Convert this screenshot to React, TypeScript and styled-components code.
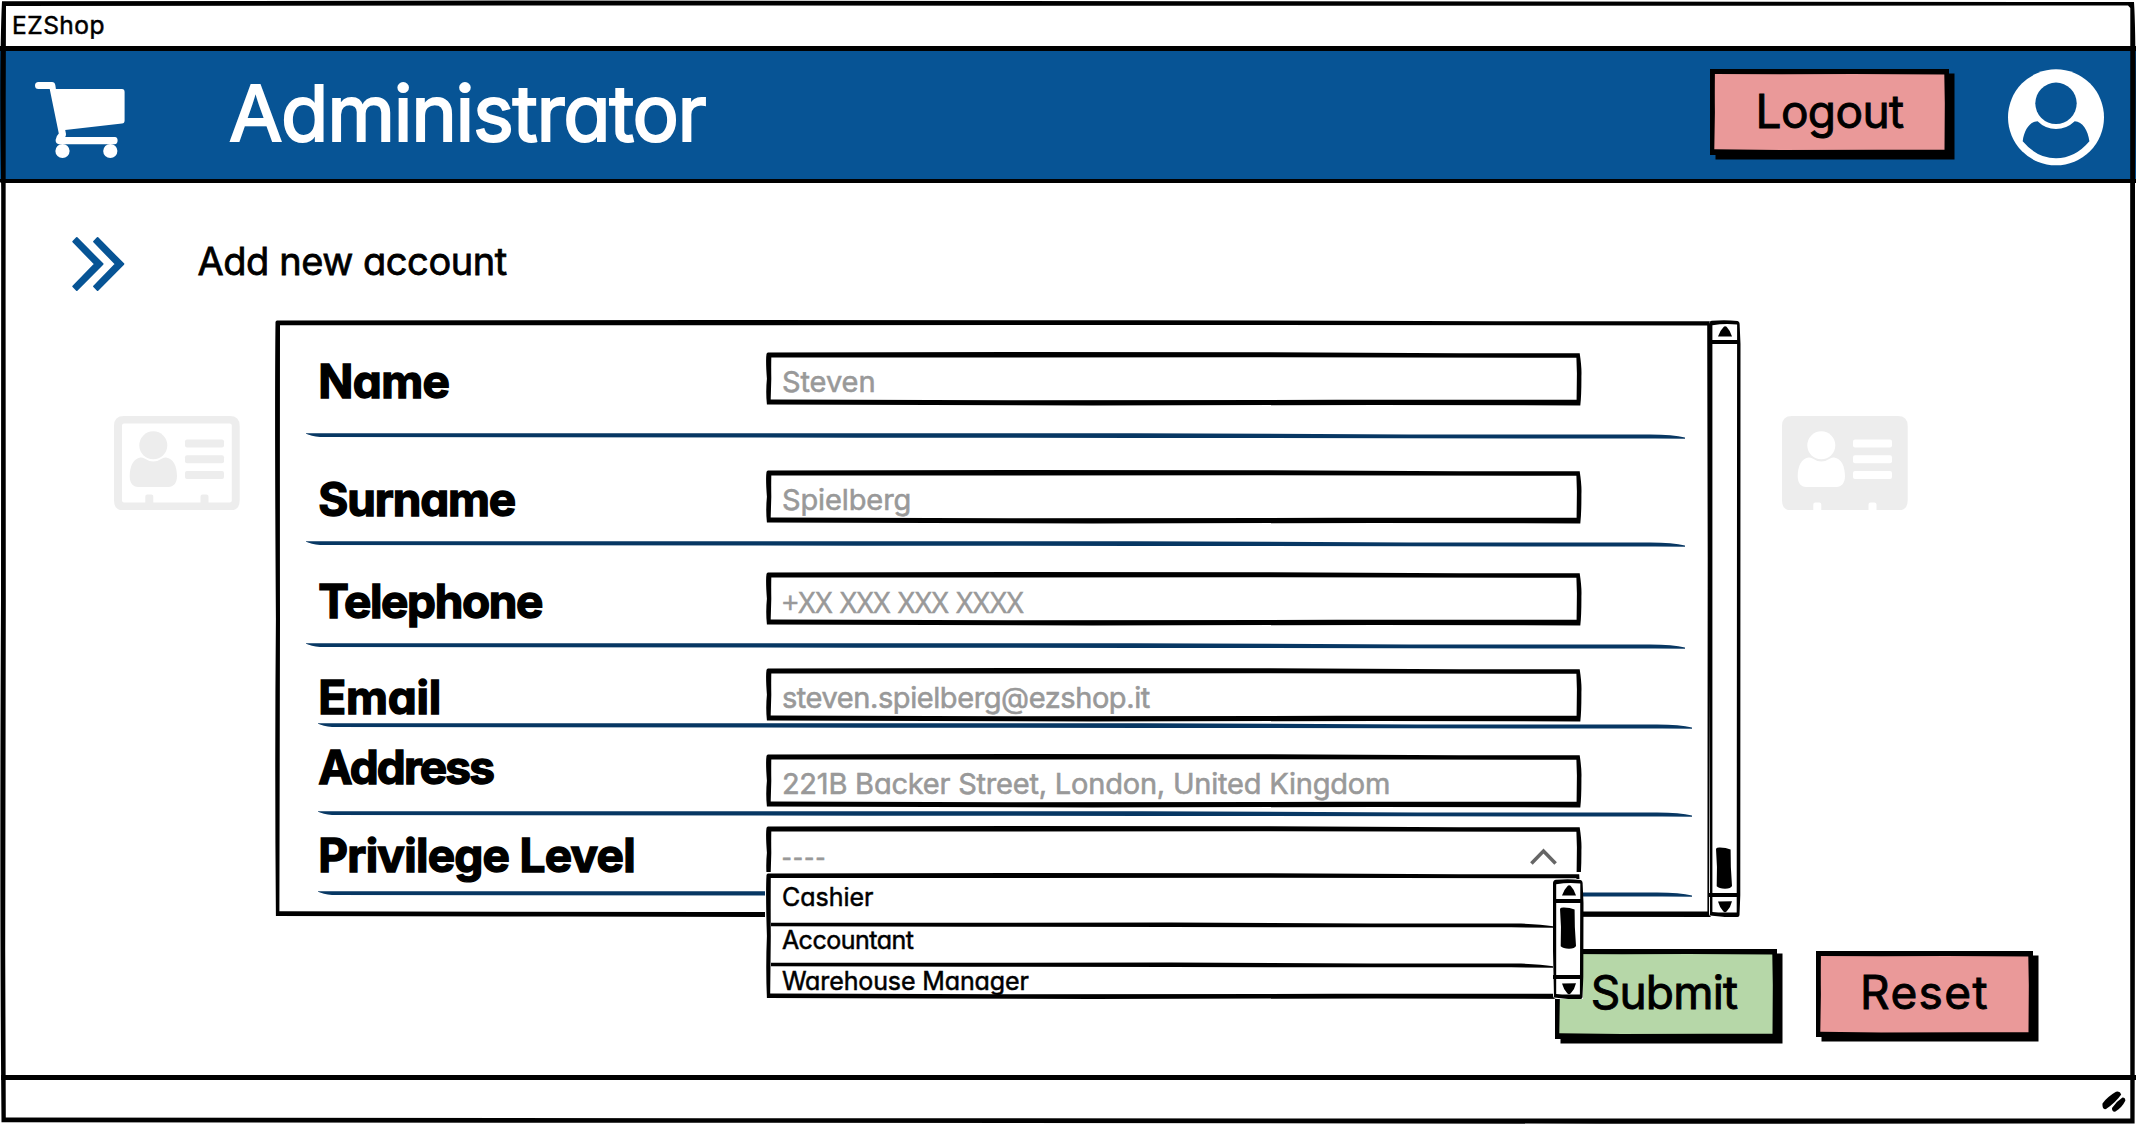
import React from "react";
import styled, { createGlobalStyle } from "styled-components";

const BLUE = "#075495";
const NAVY = "#073763";
const PINK = "#ea9999";
const GREEN = "#b6d7a8";
const GHOST = "#ededed";
const HINT = "#999999";

const GlobalStyle = createGlobalStyle`
  body {
    margin: 0;
    background: #fff;
    color: #000;
    font-family: Inter, "Liberation Sans", sans-serif;
    font-feature-settings: "cv11";
  }
  svg { display: block; flex: none; }
`;

/* ---------- hand-drawn outline ---------- */

const framePath = (w: number, h: number, t: number) =>
  `M2 .6L${w * 0.3} 0L${w * 0.6} .2L${w * 0.85} 1.3L${w - 1.8} 1.2` +
  `Q${w + 0.4} ${h * 0.3} ${w - 0.1} ${h * 0.45}Q${w} ${h * 0.8} ${w - 1.2} ${h}` +
  `L${w * 0.75} ${h - 0.6}L${w * 0.4} ${h}L${w * 0.2} ${h - 0.4}L.9 ${h - 1}` +
  `Q-.4 ${h * 0.75} .9 ${h * 0.5}Q-.5 ${h * 0.15} .5 2Q.8 .7 2 .6Z` +
  `M${t + 0.4} ${t + 0.6}Q${t + 0.2} ${h * 0.3} ${t + 0.4} ${h * 0.5}L${t - 0.2} ${h - t - 1.2}` +
  `L${w * 0.3} ${h - t - 0.4}L${w * 0.7} ${h - t - 0.8}L${w - t} ${h - t - 0.8}` +
  `L${w - t + 0.3} ${h * 0.4}L${w - t - 0.2} ${t + 0.9}L${w * 0.6} ${t + 0.4}L${w * 0.3} ${t + 0.7}Z`;

const Overlay = styled.svg`
  position: absolute;
  left: 0;
  top: 0;
  pointer-events: none;
`;

const Frame = ({ w, h, t = 4.9 }: { w: number; h: number; t?: number }) => (
  <Overlay width={w} height={h} viewBox={`0 0 ${w} ${h}`} overflow="visible">
    <path d={framePath(w, h, t)} fillRule="evenodd" fill="#000" />
  </Overlay>
);

/* ---------- text ---------- */

const Text = styled.span<{ $size: number; $track?: number; $bold?: boolean; $color?: string; $round?: number }>`
  font-size: ${(p) => p.$size}px;
  line-height: 1;
  font-weight: ${(p) => (p.$bold ? 700 : 400)};
  letter-spacing: ${(p) => p.$track ?? 0}px;
  color: ${(p) => p.$color ?? "#000"};
  -webkit-text-stroke: ${(p) => p.$round ?? 0.02}em ${(p) => p.$color ?? "#000"};
  stroke-linejoin: round;
  white-space: nowrap;
`;

const Hint = styled(Text)<{ $narrow?: boolean }>`
  ${(p) => p.$narrow && `font-family: "Open Sans", sans-serif;`}
`;

/* ---------- window ---------- */

const Window = styled.div`
  position: relative;
  display: flex;
  flex-direction: column;
  width: 2136px;
  height: 1124px;
  overflow: hidden;
  background: #fff;
`;

const WindowOutline = () => (
  <Overlay width="2136" height="1124" viewBox="0 0 2136 1124">
    <path fill="#fff" d="M0 182.400H1.200V1074L.3 1124H0Z" />
    <path
      fillRule="evenodd"
      d="M2 1.300L500 .6L1200 1.200L2134 2Q2136.500 40 2135 180L2135.300 700L2134.600 1123.600L1600 1123.700L700 1122.800L1.500 1122.200Q-.5 900 1 600L1.200 190Q-.8 60 2 1.300Z
         M6 6L5.700 100L5.600 300L5.800 600L5.200 950L5.800 1117.400L700 1118.200L1600 1118.500L2130.300 1118.400L2130 500L2130.300 8L2128 5.600L1100 5.800L600 5.400Z"
    />
  </Overlay>
);

const TitleBar = styled.div`
  box-sizing: border-box;
  height: 51px;
  padding: 12.6px 0 0 12px;
  border-bottom: 5px solid #000;
`;

const Header = styled.header`
  box-sizing: border-box;
  display: flex;
  align-items: flex-start;
  height: 131.5px;
  padding-left: 35px;
  background: ${BLUE};
  border-bottom: 4.5px solid #000;
`;

const CartIcon = styled.svg`
  margin-top: 31px;
`;

const HeaderTitle = styled.h1`
  display: flex;
  flex: 1;
  margin: 24px 0 0 103px;
`;

const Avatar = styled.svg`
  margin: 17.5px 32px 0 59px;
`;

const Button = styled.button<{ $fill: string; $w: number; $h: number; $top: number; $left?: number; $pad: number; $nudge?: number }>`
  position: relative;
  flex: none;
  box-sizing: border-box;
  display: flex;
  justify-content: center;
  align-items: flex-start;
  width: ${(p) => p.$w}px;
  height: ${(p) => p.$h}px;
  margin: ${(p) => p.$top}px 0 0 ${(p) => p.$left ?? 0}px;
  padding: ${(p) => p.$pad}px ${(p) => p.$nudge ?? 0}px 0 0;
  border: 0;
  font-family: inherit;
  font-feature-settings: inherit;
  background: ${(p) => p.$fill};
  box-shadow: inset 0 0 0 2px #000, 5.5px 4.5px 0 #000;
`;

/* ---------- body ---------- */

const Body = styled.main`
  flex: 1;
  display: flex;
  flex-direction: column;
`;

const Heading = styled.div`
  display: flex;
  align-items: flex-start;
  height: 137.8px;
  padding-left: 72px;
`;

const Chevrons = styled.svg`
  margin-top: 54.5px;
`;

const HeadingText = styled.h2`
  display: flex;
  margin: 59.4px 0 0 72.5px;
`;

const Middle = styled.div`
  display: flex;
  align-items: flex-start;
`;

const Card = styled.svg<{ $left: number }>`
  margin: 95.4px 0 0 ${(p) => p.$left}px;
`;

const Panel = styled.section`
  position: relative;
  z-index: 1;
  display: flex;
  width: 1465.5px;
  height: 597px;
  margin-left: 35px;
`;

const Form = styled.div`
  flex: 1;
  padding: 4.7px 0 0 43.6px;
`;

const Row = styled.div<{ $h: number }>`
  display: flex;
  flex-direction: column;
  height: ${(p) => p.$h}px;
`;

const Fields = styled.div`
  flex: 1;
  display: grid;
  grid-template-columns: 447.6px 815.5px;
  align-items: start;
  min-height: 0;
`;

const Label = styled.label<{ $top: number }>`
  display: flex;
  margin-top: ${(p) => p.$top}px;
`;

const Field = styled.div<{ $top: number }>`
  position: relative;
  box-sizing: border-box;
  display: flex;
  height: 53.5px;
  margin-top: ${(p) => p.$top}px;
  padding: 14.8px 0 0 16px;
`;

const Select = styled(Field)`
  height: 46px;
`;

const SelectFrame = styled.div`
  position: absolute;
  inset: 0 -2px 0 -2px;
  overflow: hidden;
  & > svg { left: 2px; }
`;

const Caret = styled.svg`
  margin: 7px 24.5px 0 auto;
`;

const RuleSvg = styled.svg<{ $shift: number }>`
  margin-left: ${(p) => p.$shift}px;
`;

const Rule = ({ w, shift }: { w: number; shift: number }) => (
  <RuleSvg $shift={shift} width={w} height="6" viewBox={`0 0 ${w} 6`}>
    <path
      fill={NAVY}
      d={`M0 .2L${w * 0.6} .3L${w * 0.8} 1.4L${w - 35} 1.6Q${w - 12} 1.8 ${w} 4.6V5.7L${w - 30} 5.6L${w * 0.6} 4.9L${w * 0.4} 4.7L14 4Q5 3 0 .8Z`}
    />
  </RuleSvg>
);

/* ---------- dropdown ---------- */

const Menu = styled.div`
  position: absolute;
  left: -1px;
  top: 46px;
  z-index: 2;
  display: flex;
  width: 818px;
  height: 127px;
  background: #fff;
`;

const MenuFrame = styled.div`
  position: absolute;
  left: 1px;
  top: 0.6px;
`;

const Options = styled.ul`
  flex: 1;
  margin: 0;
  padding: 0 0 0 6px;
  list-style: none;
`;

const Option = styled.li<{ $h: number; $pad: number }>`
  box-sizing: border-box;
  display: flex;
  flex-direction: column;
  justify-content: space-between;
  height: ${(p) => p.$h}px;
  padding: ${(p) => p.$pad}px 0 0 11px;
`;

const Divider = styled.svg`
  margin-left: -11px;
`;

/* ---------- scrollbar ---------- */

const Bar = styled.div<{ $w: number; $h: number; $top: number }>`
  position: relative;
  flex: none;
  display: flex;
  flex-direction: column;
  align-items: center;
  width: ${(p) => p.$w}px;
  height: ${(p) => p.$h}px;
  margin-top: ${(p) => p.$top}px;
  background: #fff;
  border-radius: 4px;
`;

const Cap = styled.div<{ $end?: boolean }>`
  box-sizing: border-box;
  display: flex;
  justify-content: center;
  width: 100%;
  height: 24px;
  padding: ${(p) => (p.$end ? 4 : 6)}px 0 0 2px;
  border: 0 solid #000;
  border-width: ${(p) => (p.$end ? "4px 0 0" : "0 0 4px")};
`;

const Track = styled.div<{ $down?: boolean }>`
  flex: 1;
  display: flex;
  flex-direction: column;
  justify-content: ${(p) => (p.$down ? "flex-end" : "flex-start")};
  padding: ${(p) => (p.$down ? "0 0 4px" : "4px 0 0")};
`;

const ScrollBar = ({ w, h, top = 0, t, down }: { w: number; h: number; top?: number; t: number; down?: boolean }) => (
  <Bar $w={w} $h={h} $top={top}>
    <Cap>
      <svg width="14" height="11" viewBox="0 0 14 11">
        <path d="M0 10.6Q1.5 5 5.6.9Q7 -.3 8.6.8Q12.500 5 14 10.600Z" />
      </svg>
    </Cap>
    <Track $down={down}>
      <svg width="16" height="42" viewBox="0 0 16 42">
        <path d="M0 1.800Q1 .2 4 .4Q10 .6 14.600 2.400Q14.400 20 16 39Q15 41.500 9 41.800Q3 41.500 .7 39.200Q1.600 20 0 1.800Z" />
      </svg>
    </Track>
    <Cap $end>
      <svg width="14" height="12" viewBox="0 0 14 12">
        <path d="M0 .4L14 .2Q12.800 6 8.800 10.200Q7 12.200 5.200 10.200Q1.500 6 0 .4Z" />
      </svg>
    </Cap>
    <Overlay width={w} height={h} viewBox={`0 0 ${w} ${h}`} overflow="visible">
      <path
        fillRule="evenodd"
        d={`M3 .8Q${w / 2} -.6 ${w - 3} 1Q${w - 0.6} 1.4 ${w - 0.8} 6L${w} 24L${w - 0.2} ${h - 22}L${w - 1} ${h - 2}Q${w - 1} ${h} ${w - 3} ${h}H${w / 2}L1 ${h - 1.4}L0 ${h * 0.6}V4Q.2 1.200 3 .8Z
            M${t} 5.200Q${w / 2} 3.400 ${w - t} 4.600L${w - t - 0.2} ${h * 0.5}L${w - t - 0.4} ${h - 4.400}H${t + 6}L${t} ${h - 5}Z`}
      />
    </Overlay>
  </Bar>
);

/* ---------- footer ---------- */

const Actions = styled.div`
  display: flex;
  align-items: flex-start;
  padding-left: 1555px;
`;

const StatusBar = styled.footer`
  box-sizing: border-box;
  display: flex;
  justify-content: flex-end;
  height: 49.500px;
  padding: 11px 9px 0 0;
  border-top: 5px solid #000;
`;

/* ---------- icons ---------- */

const Person = () => (
  <>
    <circle cx="39.300" cy="29.300" r="14" />
    <path d="M26.500 41.400Q28.500 41.200 30.500 42.600Q39.300 48.600 48.100 42.600Q50.100 41.200 52.100 41.400C59.500 42.500 62.900 50 63 60C63 67 59.500 71 54.500 71H24.100C19 71 15.700 67 15.700 60C15.900 50 19.300 42.500 26.500 41.400Z" />
    <rect x="71" y="23.500" width="39" height="8" rx="2" />
    <rect x="71" y="39.300" width="39" height="8" rx="2" />
    <rect x="71" y="55" width="39" height="8" rx="2" />
  </>
);

const OutlinedCard = () => (
  <Card $left={114} width="125.700" height="94.500" viewBox="0 0 125.700 94.500" fill={GHOST}>
    <path
      fillRule="evenodd"
      d="M10 0H115.700Q125.700 0 125.700 10V84.500Q125.700 94.500 115.700 94.500H10Q0 94.500 0 84.500V10Q0 0 10 0ZM10 7.600Q8 7.600 8 9.600V84.400Q8 86.400 10 86.400H31.300V80.500Q31.300 78.500 33.300 78.500H37.300Q39.300 78.500 39.300 80.500V86.400H86.500V80.500Q86.500 78.500 88.500 78.500H92.500Q94.500 78.500 94.500 80.500V86.400H115.800Q117.800 86.400 117.800 84.400V9.600Q117.800 7.600 115.800 7.600Z"
    />
    <Person />
  </Card>
);

const FilledCard = () => (
  <Card $left={41.8} width="125.700" height="94.500" viewBox="0 0 125.700 94.500" fill={GHOST}>
    <path d="M10 0H115.700Q125.700 0 125.700 10V84.500Q125.700 94.500 115.700 94.500H94.500V88.500Q94.500 86.500 92.500 86.500H88.500Q86.500 86.500 86.500 88.500V94.500H39.300V88.500Q39.300 86.500 37.300 86.500H33.300Q31.300 86.500 31.300 88.500V94.500H10Q0 94.500 0 84.500V10Q0 0 10 0Z" />
    <g fill="#fff">
      <Person />
    </g>
  </Card>
);

/* ---------- data ---------- */

interface Entry {
  label: string;
  track: number;
  labelTop: number;
  hint: string;
  hintTrack: number;
  narrow?: boolean;
  top: number;
  height: number;
  wide?: boolean;
}

const ENTRIES: Entry[] = [
  { label: "Name", track: -0.6, labelTop: 33, hint: "Steven", hintTrack: -0.05, top: 27.3, height: 114, wide: true },
  { label: "Surname", track: -1.15, labelTop: 37.2, hint: "Spielberg", hintTrack: -0.1, top: 31.3, height: 108, wide: true },
  { label: "Telephone", track: -1.4, labelTop: 31, hint: "+XX XXX XXX XXXX", hintTrack: 0.1, narrow: true, top: 25, height: 102, wide: true },
  { label: "Email", track: -0.2, labelTop: 25, hint: "steven.spielberg@ezshop.it", hintTrack: -0.42, top: 19, height: 80 },
  { label: "Address", track: -1.85, labelTop: 15, hint: "221B Backer Street, London, United Kingdom", hintTrack: -0.21, top: 25, height: 88 },
];

const OPTIONS = [
  { name: "Cashier", track: 0, height: 56, pad: 13.4 },
  { name: "Accountant", track: -0.5, height: 40.3, pad: 0 },
  { name: "Warehouse Manager", track: -0.12, height: 30, pad: 1 },
];

export default function App() {
  return (
    <Window>
      <GlobalStyle />
      <TitleBar>
        <Text as="div" $size={24.5} $track={0.5}>EZShop</Text>
      </TitleBar>

      <Header>
        <CartIcon width="91" height="77" viewBox="0 0 91 77" fill="#fff">
          <path d="M3.500 0H17Q19.800 0 20.300 3L20.900 7H87Q89.600 7 89.600 10V38.500Q89.600 41.300 87 41.600L30.200 48L31 52Q31 54 30.200 55H80Q82.600 55 82.600 58.500Q82.600 62.200 79.500 62.200H24Q20.600 62 20.600 58Q21 54 23.800 51.500L14.700 7H3.500Q0 7 0 3.500Q0 0 3.500 0Z" />
          <circle cx="27.500" cy="69" r="7.100" />
          <circle cx="75.300" cy="69" r="7.100" />
        </CartIcon>
        <HeaderTitle>
          <Text $size={77.5} $track={-1.35} $round={0.026} $color="#ffffff">Administrator</Text>
        </HeaderTitle>
        <Button $fill={PINK} $w={239} $h={86} $top={18.300} $pad={19}>
          <Frame w={239} h={86} t={4.5} />
          <Text $size={46} $track={-0.6}>Logout</Text>
        </Button>
        <Avatar width="96" height="97" viewBox="0 0 96 97">
          <circle cx="48" cy="48.300" r="48" fill="#fff" />
          <circle cx="48" cy="34.300" r="20.700" fill={BLUE} />
          <path
            fill={BLUE}
            d="M29.600 52.200Q37.500 60 48 60Q58.500 60 66.700 52.200C74.500 52.600 80 61 81.400 72.300Q67 89.300 48 89.300Q29 89.300 14.700 72.300C16 61 21.500 52.600 29.600 52.200Z"
          />
        </Avatar>
      </Header>

      <Body>
        <Heading>
          <Chevrons width="53" height="54" viewBox="0 0 53 54" fill={BLUE} stroke={BLUE} strokeWidth="1.800" strokeLinejoin="round">
            <path d="M4.800 1L30.600 27L4.800 53L1.200 49.400L22.800 27L1.200 4.600Z" />
            <path d="M25.600 1L51.400 27L25.600 53L22 49.400L43.600 27L22 4.600Z" />
          </Chevrons>
          <HeadingText>
            <Text $size={38} $track={-0.45}>Add new account</Text>
          </HeadingText>
        </Heading>

        <Middle>
          <OutlinedCard />
          <Panel>
            <Frame w={1437} h={597} t={4.6} />
            <Form>
              {ENTRIES.map((e) => (
                <Row key={e.label} $h={e.height}>
                  <Fields>
                    <Label $top={e.labelTop}>
                      <Text $size={46} $track={e.track} $round={0.03} $bold>{e.label}</Text>
                    </Label>
                    <Field $top={e.top}>
                      <Frame w={815.5} h={53.5} />
                      <Hint $size={29} $track={e.hintTrack} $color={HINT} $narrow={e.narrow}>{e.hint}</Hint>
                    </Field>
                  </Fields>
                  <Rule w={e.wide ? 1379 : 1374} shift={e.wide ? -12 : 0} />
                </Row>
              ))}
              <Row $h={80}>
                <Fields>
                  <Label $top={15.300}>
                    <Text $size={46} $track={-0.75} $round={0.03} $bold>Privilege Level</Text>
                  </Label>
                  <Select $top={9}>
                    <SelectFrame>
                      <Frame w={815.5} h={53.5} />
                    </SelectFrame>
                    <Hint $size={29} $track={2} $color={HINT} $narrow>----</Hint>
                    <Caret width="27" height="17" viewBox="0 0 27 17" fill="none" stroke="#666" strokeWidth="3.600">
                      <path d="M1.400 15.400L13.500 3L25.600 15.400" />
                    </Caret>
                    <Menu>
                      <MenuFrame>
                        <Frame w={815} h={126} t={4.400} />
                      </MenuFrame>
                      <Options>
                        {OPTIONS.map((o, i) => (
                          <Option key={o.name} $h={o.height} $pad={o.pad}>
                            <Text $size={25} $track={o.track}>{o.name}</Text>
                            {i < 2 && (
                              <Divider width="782" height="6" viewBox="0 0 782 6">
                                <path d="M0 .8L400 .6L600 1.400L750 1.600Q770 2.200 782 4.200V5.800L740 5.200L400 5.100L200 4.800L0 4.200Z" />
                              </Divider>
                            )}
                          </Option>
                        ))}
                      </Options>
                      <ScrollBar w={30.500} h={120} top={7} t={3.200} />
                    </Menu>
                  </Select>
                </Fields>
                <Rule w={1374} shift={0} />
              </Row>
            </Form>
            <ScrollBar w={31.500} h={597} t={3.400} down />
          </Panel>
          <FilledCard />
        </Middle>

        <Actions>
          <Button $fill={GREEN} $w={222} $h={90} $top={31.600} $pad={20.600} $nudge={4}>
            <Frame w={222} h={90} t={4.500} />
            <Text $size={46} $track={-0.800}>Submit</Text>
          </Button>
          <Button $fill={PINK} $w={217} $h={86.500} $top={33.600} $left={39} $pad={18.600}>
            <Frame w={217} h={86.500} t={4.500} />
            <Text $size={46} $track={1.400}>Reset</Text>
          </Button>
        </Actions>
      </Body>

      <StatusBar>
        <svg width="25" height="22" viewBox="0 0 25 22">
          <path d="M.5 12.500Q5 6 14 .8Q18 -.2 19.200 3.400Q14 11 4 18Q0 19 .5 12.500Z" />
          <path d="M10 17Q14 10.500 20.500 6.400Q23.500 6.400 23.300 9.800Q20 16.500 13.500 20.600Q10 21.500 10 17Z" />
        </svg>
      </StatusBar>
      <WindowOutline />
    </Window>
  );
}
